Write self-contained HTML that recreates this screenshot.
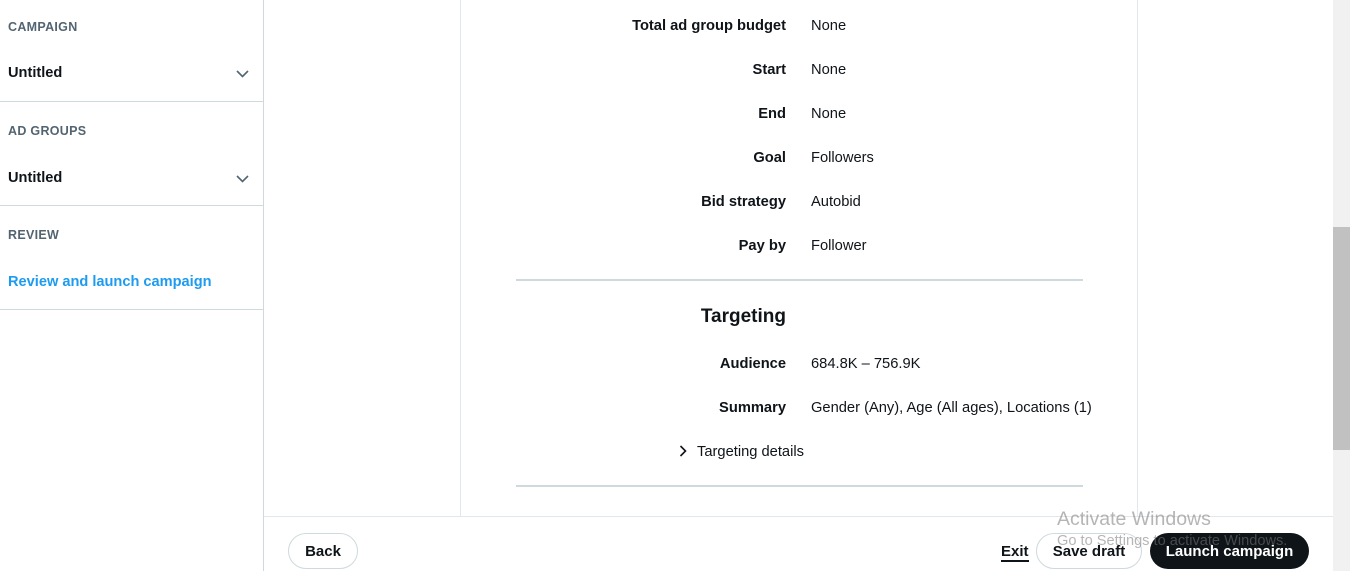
<!DOCTYPE html>
<html><head><style>
*{margin:0;padding:0;box-sizing:border-box}
body{width:1350px;height:571px;overflow:hidden;background:#fff;font-family:"Liberation Sans",Arial,sans-serif;color:#0f1419;position:relative}
.side{position:absolute;left:0;top:0;width:264px;height:571px;border-right:1px solid #cfd9de}
.sec{border-bottom:1px solid #cfd9de;height:104px;position:relative}
.sec:first-child{height:102px}
.h{position:absolute;left:8px;top:22px;font-size:12.5px;font-weight:bold;color:#536471;letter-spacing:.3px}
.v{position:absolute;left:8px;top:68px;font-size:14.6px;font-weight:bold}
.chev{position:absolute;left:236px;top:73px}
.sec:first-child .h{top:20px}
.sec:first-child .v{top:65px}
.sec:first-child .chev{top:70px}
.card{position:absolute;left:460px;top:0;width:678px;height:516px;border-left:1px solid #e1e8ed;border-right:1px solid #e1e8ed}
.row{position:absolute;left:0;width:100%;font-size:14.7px;height:20px;line-height:20px}
.row .l{position:absolute;right:351px;font-weight:bold;white-space:nowrap}
.row .r{position:absolute;left:350px;white-space:nowrap}
.sep{position:absolute;left:55px;width:567px;height:2px;background:#cfd9de}
.foot{position:absolute;left:264px;top:516px;width:1069px;height:55px;border-top:1px solid #e1e8ed;background:#fff}
.btn{position:absolute;height:36px;border-radius:18px;font-size:15px;font-weight:bold;line-height:36px;text-align:center}
.scroll{position:absolute;left:1333px;top:0;width:17px;height:571px;background:#f1f1f1}
.thumb{position:absolute;left:1333px;top:227px;width:17px;height:223px;background:#c1c1c1}
.aw{position:absolute;left:1057px;color:rgba(120,120,120,.55);white-space:nowrap}
</style></head><body>
<div class="side">
 <div class="sec"><div class="h">CAMPAIGN</div><div class="v">Untitled</div>
 <svg class="chev" width="13" height="8" viewBox="0 0 13 8"><path d="M1 1l5.5 5.5L12 1" fill="none" stroke="#536471" stroke-width="1.6"/></svg></div>
 <div class="sec"><div class="h">AD GROUPS</div><div class="v">Untitled</div>
 <svg class="chev" width="13" height="8" viewBox="0 0 13 8"><path d="M1 1l5.5 5.5L12 1" fill="none" stroke="#536471" stroke-width="1.6"/></svg></div>
 <div class="sec"><div class="h">REVIEW</div><div class="v" style="color:#1d9bf0">Review and launch campaign</div></div>
</div>
<div class="card">
 <div class="row" style="top:16px"><span class="l">Total ad group budget</span><span class="r">None</span></div>
 <div class="row" style="top:60px"><span class="l">Start</span><span class="r">None</span></div>
 <div class="row" style="top:104px"><span class="l">End</span><span class="r">None</span></div>
 <div class="row" style="top:148px"><span class="l">Goal</span><span class="r">Followers</span></div>
 <div class="row" style="top:192px"><span class="l">Bid strategy</span><span class="r">Autobid</span></div>
 <div class="row" style="top:236px"><span class="l">Pay by</span><span class="r">Follower</span></div>
 <div class="sep" style="top:279px"></div>
 <div class="row" style="top:307px;height:24px"><span class="l" style="font-size:19px">Targeting</span></div>
 <div class="row" style="top:354px"><span class="l">Audience</span><span class="r">684.8K – 756.9K</span></div>
 <div class="row" style="top:398px"><span class="l">Summary</span><span class="r">Gender (Any), Age (All ages), Locations (1)</span></div>
 <div class="row" style="top:442px"><span style="position:absolute;left:218px;top:1px"><svg width="8" height="12" viewBox="0 0 8 12"><path d="M1.5 1l5 5-5 5" fill="none" stroke="#0f1419" stroke-width="1.6"/></svg></span><span class="r" style="left:236px">Targeting details</span></div>
 <div class="sep" style="top:485px"></div>
</div>
<div class="foot">
 <div class="btn" style="left:24px;top:16px;width:70px;border:1px solid #cfd9de;line-height:36px">Back</div>
 <div style="position:absolute;left:737px;top:26px;font-size:15px;font-weight:bold;border-bottom:2px solid #0f1419;line-height:17px">Exit</div>
 <div class="btn" style="left:772px;top:16px;width:106px;border:1px solid #cfd9de">Save draft</div>
 <div class="btn" style="left:886px;top:16px;width:159px;background:#0f1419;color:#fff;line-height:38px">Launch campaign</div>
</div>
<div class="aw" style="top:508px;font-size:19.5px">Activate Windows</div>
<div class="aw" style="top:533px;font-size:14.6px">Go to Settings to activate Windows.</div>
<div class="scroll"></div><div class="thumb"></div>
</body></html>
